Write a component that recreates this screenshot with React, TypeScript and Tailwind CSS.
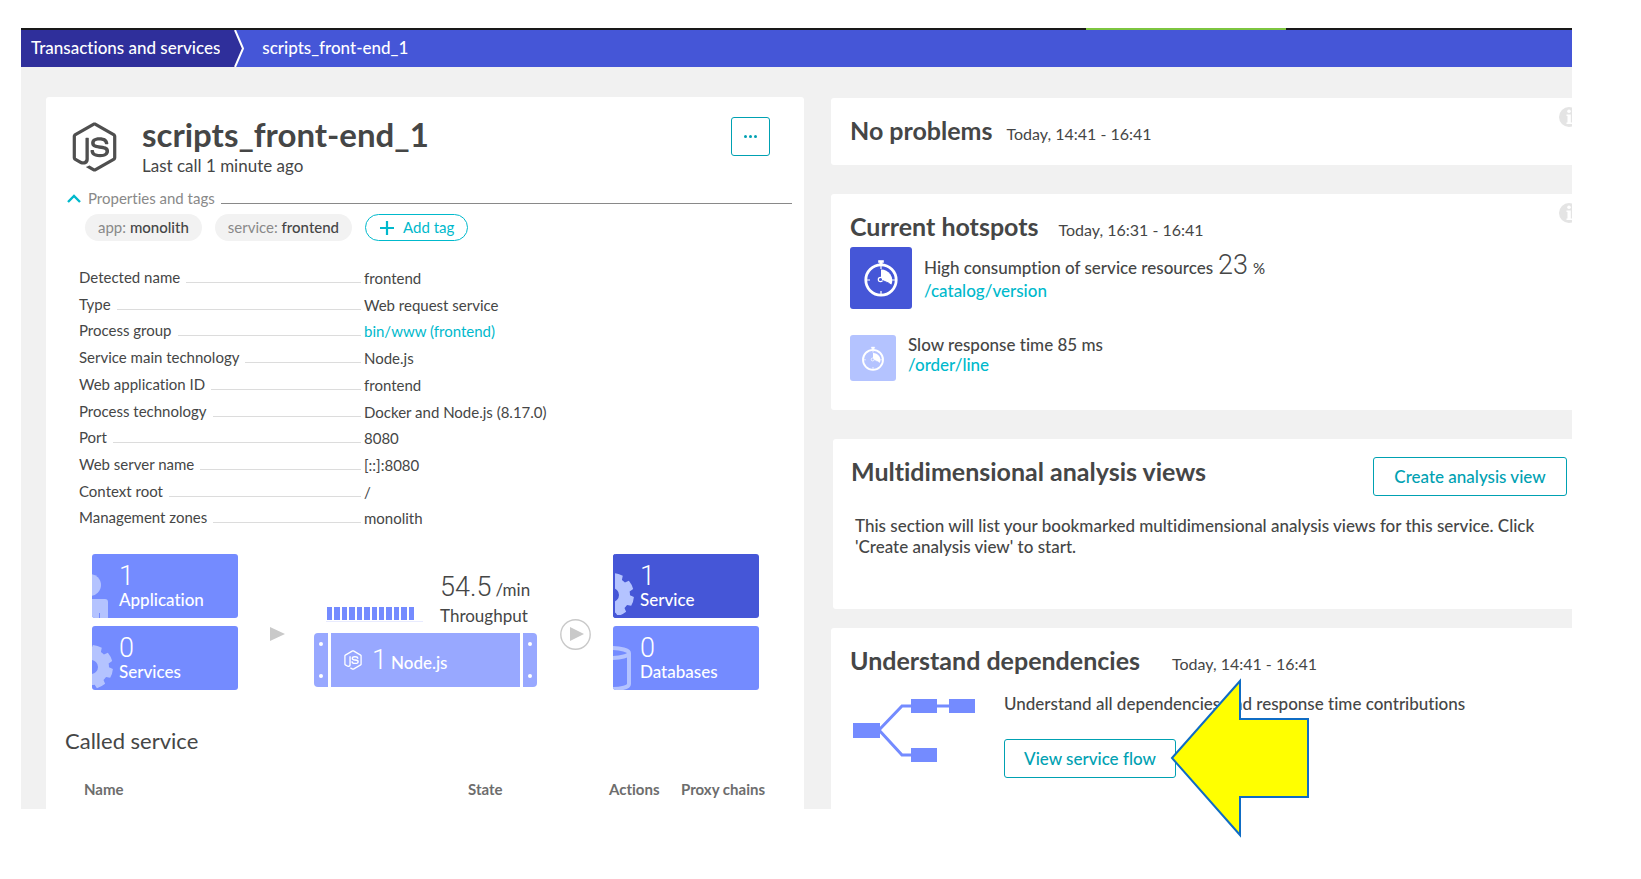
import type { ReactNode } from "react";
import { FaNodeJs } from "react-icons/fa";

type Property = { label: string; value: string; link?: boolean };

const properties: Property[] = [
  { label: "Detected name", value: "frontend" },
  { label: "Type", value: "Web request service" },
  { label: "Process group", value: "bin/www (frontend)", link: true },
  { label: "Service main technology", value: "Node.js" },
  { label: "Web application ID", value: "frontend" },
  { label: "Process technology", value: "Docker and Node.js (8.17.0)" },
  { label: "Port", value: "8080" },
  { label: "Web server name", value: "[::]:8080" },
  { label: "Context root", value: "/" },
  { label: "Management zones", value: "monolith" },
];

function gearPath(cx: number, cy: number, outer: number, root: number, hole: number) {
  const teeth = 8;
  const step = (Math.PI * 2) / teeth;
  const pt = (r: number, a: number) =>
    `${(cx + r * Math.cos(a)).toFixed(2)} ${(cy + r * Math.sin(a)).toFixed(2)}`;
  let d = "";
  for (let i = 0; i < teeth; i++) {
    const a = i * step + 0.3;
    d += `${i === 0 ? "M" : "L"}${pt(root, a - step * 0.36)}`;
    d += `L${pt(outer, a - step * 0.27)}`;
    d += `A${outer} ${outer} 0 0 1 ${pt(outer, a + step * 0.27)}`;
    d += `L${pt(root, a + step * 0.36)}`;
    d += `A${root} ${root} 0 0 1 ${pt(root, a + step * 0.64)}`;
  }
  d += `ZM${cx + hole} ${cy}A${hole} ${hole} 0 1 0 ${cx - hole} ${cy}A${hole} ${hole} 0 1 0 ${cx + hole} ${cy}Z`;
  return d;
}

function GearArt() {
  return <path fillRule="evenodd" d={gearPath(-1, 41, 22, 18, 7)} fill="#b4c3ff" />;
}

function InsetGearArt() {
  return (
    <>
      <GearArt />
      <path d="M0 0h2v64H0zM0 61h28v3H0z" fill="#4556d7" />
    </>
  );
}

function PersonArt() {
  return (
    <g fill="#b4c3ff">
      <circle cx="-2" cy="31" r="11" />
      <path d="M-4 45H13a3 3 0 0 1 3 3V64H8V59H7V64H-4Z" />
    </g>
  );
}

function DatabaseArt() {
  return (
    <g fill="none" stroke="#b4c3ff" strokeWidth="4">
      <ellipse cx="-2" cy="27" rx="18" ry="5" />
      <path d="M16 27V58C16 61 8 63 -2 63" />
    </g>
  );
}

function Stopwatch({ className }: { className: string }) {
  return (
    <svg viewBox="0 0 36 38" className={className} fill="none" aria-hidden="true">
      <circle cx="18" cy="21" r="15.2" stroke="white" strokeWidth="2.8" />
      <path d="M15.500 1.500h5v2h-1.200v2.500h-2.600V3.500h-1.200z" fill="white" stroke="white" strokeWidth="0.6" />
      <path d="M18 10.500V21l10.500 4.500A11 11 0 0 0 18 10.500z" fill="white" />
      <path d="M18 6v4M18 32v3M4 21h3M29 21h3" stroke="white" strokeWidth="1.200" />
      <circle cx="17.500" cy="20.500" r="2.200" fill="currentColor" stroke="white" strokeWidth="1.200" />
      <path d="M19.500 21.500l7 3" stroke="currentColor" strokeWidth="1" />
    </svg>
  );
}

function InfoIcon() {
  return (
    <div className="mt-[9px] h-5 w-[13px] shrink-0 overflow-hidden">
      <svg viewBox="0 0 20 20" className="h-5 w-5" aria-hidden="true">
        <circle cx="10" cy="10" r="10" fill="#e4e4e4" />
        <circle cx="10" cy="4.300" r="1.800" fill="white" />
        <path d="M7.500 7.500h4.300v8h1.200V17H7.500v-1.500h1V9h-1z" fill="white" />
      </svg>
    </div>
  );
}

function BigNumber({ children }: { children: ReactNode }) {
  return <span className="font-['Roboto','Lato',sans-serif] text-[27px] leading-[30px] font-light">{children}</span>;
}

function Tile({ count, label, color, art }: { count: string; label: string; color: string; art: ReactNode }) {
  return (
    <div className={`relative h-16 w-[146px] overflow-hidden rounded-[3px] pt-[9px] pl-[27px] text-white ${color}`}>
      <svg viewBox="0 0 28 64" className="absolute top-0 left-0 h-16 w-7" aria-hidden="true">
        {art}
      </svg>
      <div className="flex h-[26px] items-center">
        <BigNumber>{count}</BigNumber>
      </div>
      <div className="text-[17px] leading-[22px] font-medium">{label}</div>
    </div>
  );
}

function ServerEdge({ side }: { side: "left" | "right" }) {
  return (
    <div
      className={`flex w-[14px] flex-col items-center justify-between bg-[#98a8ff] py-[9px] ${
        side === "left" ? "rounded-l-[4px]" : "rounded-r-[4px]"
      }`}
    >
      <span className="h-1 w-1 rounded-full bg-white" />
      <span className="h-1 w-1 rounded-full bg-white" />
    </div>
  );
}

function PanelHeading({ title, time, gap }: { title: string; time: string; gap: string }) {
  return (
    <div className={`flex items-baseline ${gap}`}>
      <h2 className="text-[25px] leading-7 font-bold">{title}</h2>
      <span className="text-[16px] leading-5">{time}</span>
    </div>
  );
}

const outlineButton =
  "h-[39px] shrink-0 rounded-[3px] border border-[#00a1b2] bg-white text-[17px] font-medium text-[#00a1b2]";

export default function App() {
  return (
    <div className="bg-white pt-7 pr-[69px] pb-[70px] pl-[21px] font-['Lato','Noto_Sans',sans-serif] text-[#454646] [font-variant-ligatures:none]">
      <div className="flex h-[2px] bg-[#191919]">
        <div className="ml-[1065px] w-[200px] bg-[#7dc540]" />
      </div>
      <nav
        aria-label="Breadcrumb"
        className="flex h-[37px] items-stretch bg-[#4556d7] text-[17px] leading-9 font-medium text-white"
      >
        <a href="#services" className="bg-[#2f2f9b] pl-[10px]">
          Transactions and services
        </a>
        <svg viewBox="0 0 26 37" className="h-[37px] w-[26px] shrink-0" aria-hidden="true">
          <path d="M0 0H15L23 18.500 15 37H0Z" fill="#2f2f9b" />
          <path d="M15 0L23 18.500 15 37" fill="none" stroke="white" strokeWidth="2" />
        </svg>
        <a href="#front-end" className="pl-4">
          scripts_front-end_1
        </a>
      </nav>

      <main className="grid grid-cols-[758fr_741fr] gap-x-[27px] bg-[#f1f1f1] pt-[30px] pl-[25px]">
        <section className="rounded-t-[3px] bg-white pt-[17px] pb-2">
          <header className="flex pl-[26px]">
            <FaNodeJs className="mt-2 h-[50px] w-[45px] shrink-0 text-[#4f4f4f]" />
            <div className="ml-[25px] grow">
              <h1 className="text-[33px] leading-[41px] font-bold">scripts_front-end_1</h1>
              <p className="text-[17px] leading-[22px]">Last call 1 minute ago</p>
            </div>
            <button
              type="button"
              aria-label="More actions"
              className="mt-[3px] mr-[34px] flex h-[39px] w-[39px] items-center justify-center gap-[2px] rounded-[3px] border border-[#00a1b2]"
            >
              <span className="h-[3px] w-[3px] rounded-full bg-[#00a1b2]" />
              <span className="h-[3px] w-[3px] rounded-full bg-[#00a1b2]" />
              <span className="h-[3px] w-[3px] rounded-full bg-[#00a1b2]" />
            </button>
          </header>

          <div className="mt-[10px] flex items-center pr-3 pl-[21px] text-[15px] leading-[22px]">
            <button type="button" className="flex items-center gap-[7px] text-[#898989]">
              <svg viewBox="0 0 14 9" className="h-[9px] w-[14px]" aria-hidden="true">
                <path d="M1 8L7 2L13 8" fill="none" stroke="#00b9cc" strokeWidth="2.400" />
              </svg>
              Properties and tags
            </button>
            <div className="mt-[11px] ml-[6px] h-px grow bg-[#898989]" />
          </div>

          <div className="mt-[5px] flex gap-[13px] pl-[39px] text-[15px] leading-[27px]">
            <span className="rounded-full bg-[#f2f2f2] px-[13px] text-[#898989]">
              app: <span className="font-medium text-[#454646]">monolith</span>
            </span>
            <span className="rounded-full bg-[#f2f2f2] px-[13px] text-[#898989]">
              service: <span className="font-medium text-[#454646]">frontend</span>
            </span>
            <button
              type="button"
              className="flex h-[27px] items-center gap-2 rounded-full border border-[#00b9cc] px-[13px] text-[#00b9cc]"
            >
              <svg viewBox="0 0 16 16" className="h-4 w-4" aria-hidden="true">
                <path d="M8 1V15M1 8H15" stroke="#00b9cc" strokeWidth="2.200" />
              </svg>
              Add tag
            </button>
          </div>

          <dl className="mt-[23px] grid h-[267px] grid-rows-10 pl-[33px] text-[15px] leading-[26px]">
            {properties.map((p) => (
              <div key={p.label} className="flex">
                <dt className="flex w-[282px] shrink-0 gap-[6px]">
                  {p.label}
                  <span className="mt-[18px] h-px grow bg-[#dcdcdc]" />
                </dt>
                <dd className="ml-[3px] pt-px">
                  {p.link ? (
                    <a href="#process-group" className="text-[#00b9cc]">
                      {p.value}
                    </a>
                  ) : (
                    p.value
                  )}
                </dd>
              </div>
            ))}
          </dl>

          <div className="mt-[23px] flex pl-[46px]">
            <div className="flex flex-col gap-2">
              <Tile count="1" label="Application" color="bg-[#748bff]" art={<PersonArt />} />
              <Tile count="0" label="Services" color="bg-[#748bff]" art={<GearArt />} />
            </div>
            <svg viewBox="0 0 15 14" className="mt-[73px] ml-8 h-[14px] w-[15px]" aria-hidden="true">
              <path d="M0 0L15 7L0 14Z" fill="#c9c9c9" />
            </svg>
            <div className="ml-[29px] w-[223px] pt-[18px]">
              <div className="flex items-end gap-[17px] pl-3">
                <div className="mb-[5px] flex h-[15px] w-[97px] gap-[2px] border-b border-[#e8ebff] pr-[9px] pb-px pl-px">
                  {Array.from({ length: 12 }, (_, i) => (
                    <span key={i} className="grow bg-[#748bff]" />
                  ))}
                </div>
                <div className="flex flex-col gap-[3px] text-[17px] leading-[22px] whitespace-nowrap">
                  <div className="flex items-baseline gap-1">
                    <BigNumber>54.5</BigNumber> /min
                  </div>
                  <div>Throughput</div>
                </div>
              </div>
              <div className="mt-[6px] flex h-[54px] gap-[3px]">
                <ServerEdge side="left" />
                <div className="flex grow items-center bg-[#98a8ff] pl-[13px] text-white">
                  <FaNodeJs className="h-5 w-[18px]" />
                  <div className="ml-[10px] flex items-baseline gap-1 leading-[22px]">
                    <BigNumber>1</BigNumber>
                    <span className="text-[17px] font-medium">Node.js</span>
                  </div>
                </div>
                <ServerEdge side="right" />
              </div>
            </div>
            <button type="button" aria-label="Next" className="mt-[65px] ml-[23px] h-[31px] w-[31px]">
              <svg viewBox="0 0 31 31" className="h-[31px] w-[31px]" aria-hidden="true">
                <circle cx="15.500" cy="15.500" r="14.700" fill="none" stroke="#c9c9c9" strokeWidth="1.400" />
                <path d="M10 8L24 15L10 22Z" fill="#c9c9c9" />
              </svg>
            </button>
            <div className="ml-[22px] flex flex-col gap-2">
              <Tile count="1" label="Service" color="bg-[#4556d7]" art={<InsetGearArt />} />
              <Tile count="0" label="Databases" color="bg-[#748bff]" art={<DatabaseArt />} />
            </div>
          </div>

          <h2 className="mt-[37px] pl-[19px] text-[22px] leading-7">Called service</h2>
          <table className="mt-6 ml-[38px] w-[700px] table-fixed text-left text-[15px] leading-5 text-[#6d6d6d]">
            <thead>
              <tr>
                <th className="w-[384px] font-bold">Name</th>
                <th className="w-[141px] font-bold">State</th>
                <th className="w-[72px] font-bold">Actions</th>
                <th className="font-bold">Proxy chains</th>
              </tr>
            </thead>
          </table>
        </section>

        <div className="flex flex-col pt-px">
          <section className="flex justify-between rounded-l-[3px] bg-white pl-[19px]">
            <div className="pt-[18px] pb-[21px]">
              <PanelHeading title="No problems" time="Today, 14:41 - 16:41" gap="gap-[14px]" />
            </div>
            <InfoIcon />
          </section>

          <section className="mt-[29px] flex justify-between rounded-l-[3px] bg-white pl-[19px]">
            <div className="pt-[18px] pb-[29px]">
              <PanelHeading title="Current hotspots" time="Today, 16:31 - 16:41" gap="gap-5" />
              <div className="mt-[7px] flex gap-3">
                <div className="flex h-[62px] w-[62px] items-center justify-center rounded-[3px] bg-[#4556d7] text-[#4556d7]">
                  <Stopwatch className="h-[38px] w-9" />
                </div>
                <div className="pt-[3px] text-[17px] leading-[22px] font-medium">
                  <p className="flex items-baseline gap-[5px]">
                    High consumption of service resources <BigNumber>23</BigNumber>
                    <span className="text-[15px]">%</span>
                  </p>
                  <a href="#catalog-version" className="block text-[#00b9cc]">
                    /catalog/version
                  </a>
                </div>
              </div>
              <div className="mt-[26px] flex gap-3">
                <div className="flex h-[46px] w-[46px] items-center justify-center rounded-[3px] bg-[#b4c3ff] text-[#b4c3ff]">
                  <Stopwatch className="h-[25px] w-6" />
                </div>
                <div className="text-[17px] leading-5 font-medium">
                  <p>Slow response time 85 ms</p>
                  <a href="#order-line" className="block text-[#00b9cc]">
                    /order/line
                  </a>
                </div>
              </div>
            </div>
            <InfoIcon />
          </section>

          <section className="mt-[29px] ml-[2px] rounded-l-[3px] bg-white pt-[18px] pr-[5px] pb-[52px] pl-[18px]">
            <div className="flex items-start justify-between">
              <h2 className="text-[25px] leading-7 font-bold">Multidimensional analysis views</h2>
              <button type="button" className={`${outlineButton} w-[194px]`}>
                Create analysis view
              </button>
            </div>
            <p className="mt-[19px] pl-1 text-[17px] leading-[21px] font-medium">
              This section will list your bookmarked multidimensional analysis views for this service. Click 'Create
              analysis view' to start.
            </p>
          </section>

          <section className="mt-[19px] grow rounded-tl-[3px] bg-white pt-[18px] pb-[31px] pl-[19px]">
            <PanelHeading title="Understand dependencies" time="Today, 14:41 - 16:41" gap="gap-8" />
            <div className="mt-[19px] flex">
              <svg viewBox="0 0 122 65" className="mt-[5px] ml-[3px] h-[65px] w-[122px]" aria-hidden="true">
                <path d="M26 32L49 8H96M26 32L49 57H60" fill="none" stroke="#748bff" strokeWidth="3" />
                <path d="M0 25h27v15H0zM58 1h26v14H58zM96 1h26v14H96zM58 50h26v14H58z" fill="#748bff" />
              </svg>
              <div className="ml-[29px]">
                <p className="text-[17px] leading-[22px] font-medium">
                  Understand all dependencies and response time contributions
                </p>
                <div className="relative mt-6 w-[172px]">
                  <button type="button" className={`${outlineButton} w-full`}>
                    View service flow
                  </button>
                  <svg
                    viewBox="0 0 140 160"
                    className="absolute -top-[61px] left-[166px] h-[160px] w-[140px]"
                    aria-hidden="true"
                  >
                    <path
                      d="M2 80L70 3V41H138V119H70V157Z"
                      fill="#ffff00"
                      stroke="#0f6cc4"
                      strokeWidth="2"
                    />
                  </svg>
                </div>
              </div>
            </div>
          </section>
        </div>
      </main>
    </div>
  );
}
